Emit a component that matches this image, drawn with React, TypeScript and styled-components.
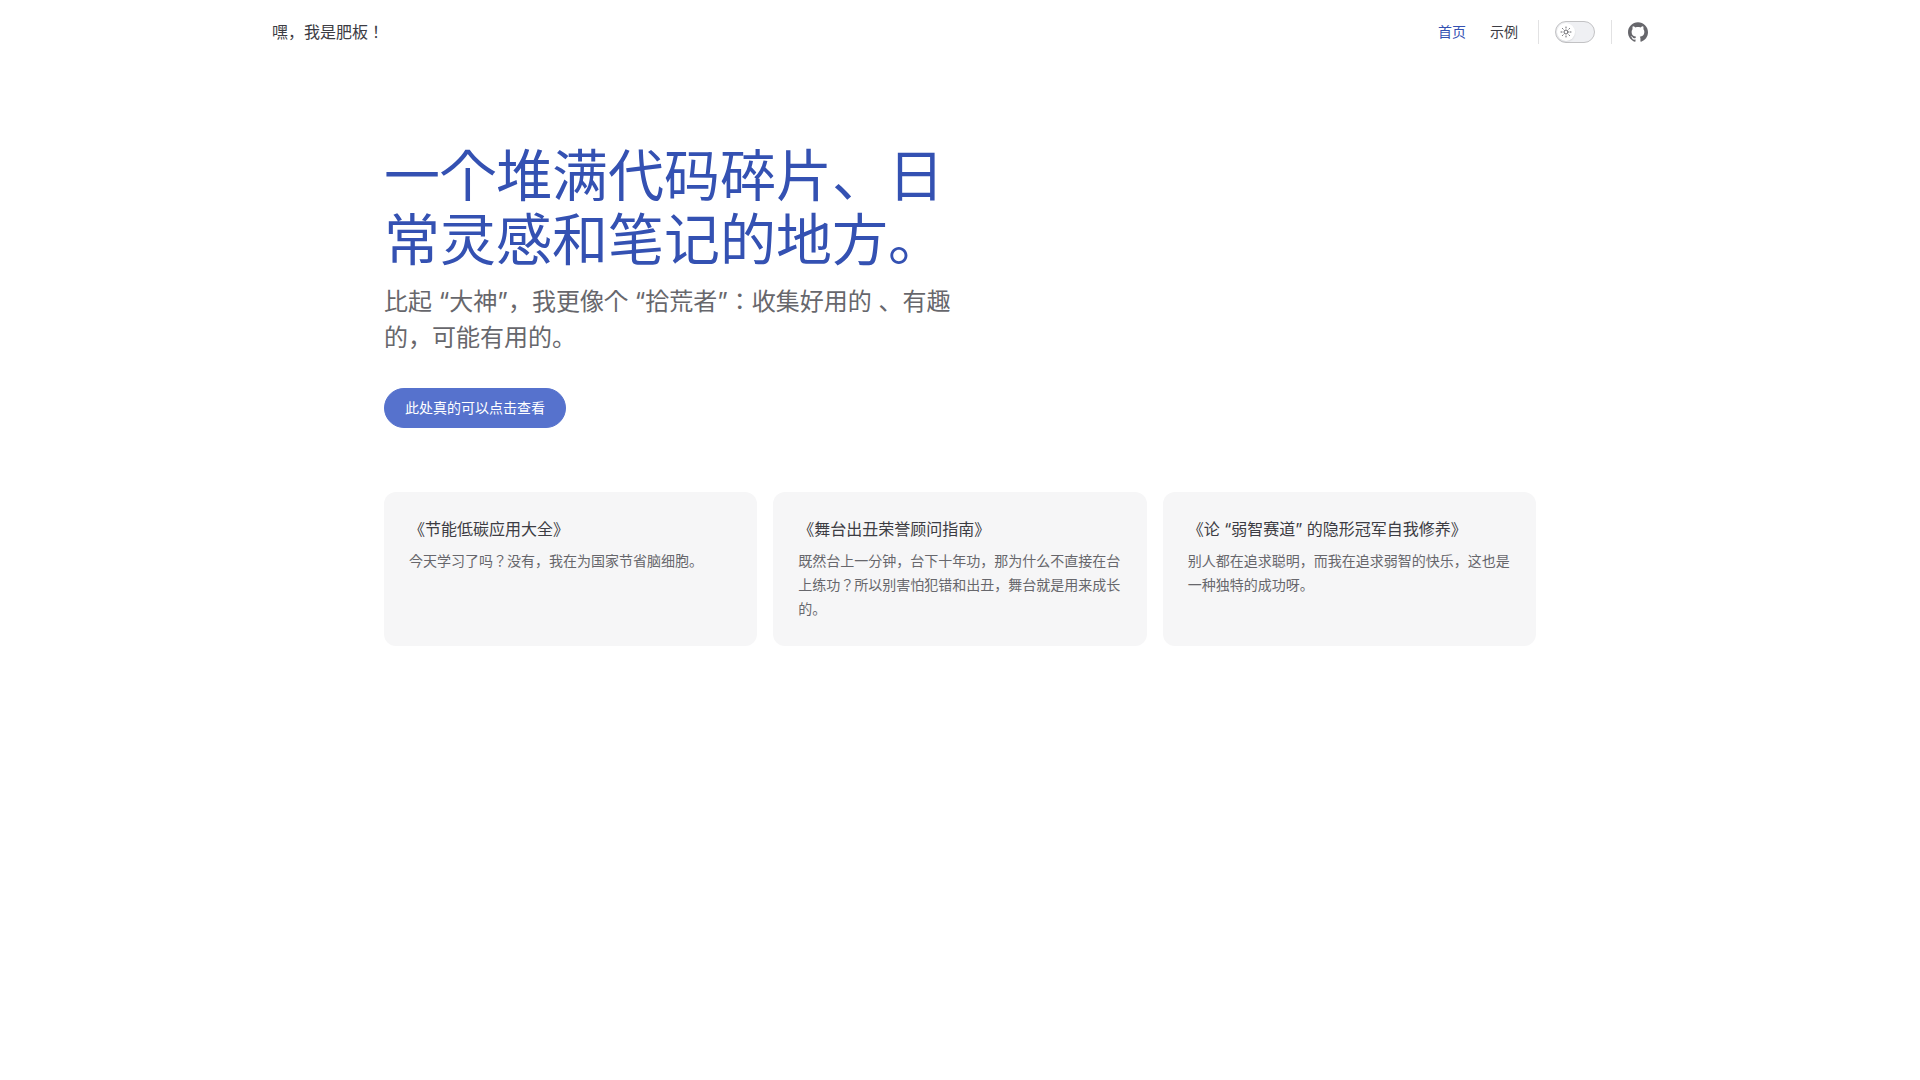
import React, { useState } from "react";
import styled, { createGlobalStyle } from "styled-components";
import { Sun } from "lucide-react";

const GlobalStyle = createGlobalStyle`
  *, *::before, *::after { box-sizing: border-box; }
  body {
    margin: 0;
    background: #ffffff;
    color: #3c3c43;
    font-family: Inter, "Noto Sans CJK JP", sans-serif;
    font-size: 16px;
    line-height: 24px;
  }
  h1, h2, p { margin: 0; font-weight: 400; }
  a { color: inherit; text-decoration: none; }
`;

const Header = styled.header`
  padding: 0 32px;
`;

const NavBar = styled.div`
  display: flex;
  align-items: center;
  justify-content: space-between;
  max-width: 1376px;
  height: 64px;
  margin: 0 auto;
`;

const SiteTitle = styled.a`
  font-size: 16px;
  line-height: 64px;
`;

const NavGroup = styled.div`
  display: flex;
  align-items: center;
`;

const Menu = styled.nav`
  display: flex;
  margin-right: 8px;
`;

const MenuLink = styled.a<{ $active?: boolean }>`
  padding: 0 12px;
  font-size: 14px;
  line-height: 64px;
  color: ${(p) => (p.$active ? "#3451b2" : "#3c3c43")};
`;

const Divider = styled.span`
  width: 1px;
  height: 24px;
  background: #e2e2e3;
`;

const Switch = styled.button`
  display: flex;
  width: 40px;
  height: 22px;
  margin: 0 16px;
  padding: 1px;
  border: 1px solid #c2c2c4;
  border-radius: 11px;
  background: #eff0f3;
  cursor: pointer;
`;

const Knob = styled.span<{ $on: boolean }>`
  display: flex;
  align-items: center;
  justify-content: center;
  width: 18px;
  height: 18px;
  margin-left: ${(p) => (p.$on ? "18px" : "0")};
  border-radius: 50%;
  background: #ffffff;
  color: #67676c;
  box-shadow: 0 1px 2px rgba(0, 0, 0, 0.04), 0 1px 2px rgba(0, 0, 0, 0.06);
`;

const SocialLink = styled.a`
  display: flex;
  margin-left: 16px;
  color: #67676c;
`;

const Main = styled.main`
  padding: 80px 64px 96px;
`;

const Container = styled.div`
  max-width: 1152px;
  margin: 0 auto;
`;

const Hero = styled.section`
  max-width: 592px;
  padding-bottom: 64px;
`;

const Headline = styled.h1`
  font-size: 56px;
  line-height: 64px;
  color: #3451b2;
`;

const Tagline = styled.p`
  max-width: 576px;
  padding-top: 12px;
  font-size: 24px;
  line-height: 36px;
  color: #67676c;
`;

const Action = styled.a`
  display: inline-block;
  margin-top: 32px;
  padding: 0 20px;
  border: 1px solid #5672cd;
  border-radius: 20px;
  background: #5672cd;
  color: #ffffff;
  font-size: 14px;
  line-height: 38px;
  vertical-align: top;
`;

const Features = styled.section`
  display: grid;
  grid-template-columns: repeat(3, 1fr);
  gap: 16px;
`;

const Card = styled.article`
  padding: 25px;
  border-radius: 12px;
  background: #f6f6f7;
`;

const CardTitle = styled.h2`
  font-size: 16px;
  line-height: 24px;
`;

const CardText = styled.p`
  padding-top: 8px;
  font-size: 14px;
  line-height: 24px;
  color: #67676c;
`;

const GithubIcon = () => (
  <svg width="20" height="20" viewBox="0 0 24 24" fill="currentColor" aria-hidden="true">
    <path d="M12 .297c-6.63 0-12 5.373-12 12 0 5.303 3.438 9.8 8.205 11.385.6.113.82-.258.82-.577 0-.285-.01-1.04-.015-2.04-3.338.724-4.042-1.61-4.042-1.61C4.422 18.07 3.633 17.7 3.633 17.7c-1.087-.744.084-.729.084-.729 1.205.084 1.838 1.236 1.838 1.236 1.07 1.835 2.809 1.305 3.495.998.108-.776.417-1.305.76-1.605-2.665-.3-5.466-1.332-5.466-5.93 0-1.31.465-2.38 1.235-3.22-.135-.303-.54-1.523.105-3.176 0 0 1.005-.322 3.3 1.23.96-.267 1.98-.399 3-.405 1.02.006 2.04.138 3 .405 2.28-1.552 3.285-1.23 3.285-1.23.645 1.653.24 2.873.12 3.176.765.84 1.23 1.91 1.23 3.22 0 4.61-2.805 5.625-5.475 5.92.42.36.81 1.096.81 2.22 0 1.606-.015 2.896-.015 3.286 0 .315.21.69.825.57C20.565 22.092 24 17.592 24 12.297c0-6.627-5.373-12-12-12" />
  </svg>
);

const features = [
  { title: "《节能低碳应用大全》", text: "今天学习了吗？没有，我在为国家节省脑细胞。" },
  {
    title: "《舞台出丑荣誉顾问指南》",
    text: "既然台上一分钟，台下十年功，那为什么不直接在台上练功？所以别害怕犯错和出丑，舞台就是用来成长的。",
  },
  {
    title: "《论 “弱智赛道” 的隐形冠军自我修养》",
    text: "别人都在追求聪明，而我在追求弱智的快乐，这也是一种独特的成功呀。",
  },
];

export default function App() {
  const [dark, setDark] = useState(false);

  return (
    <>
      <GlobalStyle />
      <Header>
        <NavBar>
          <SiteTitle href="#">嘿，我是肥板！</SiteTitle>
          <NavGroup>
            <Menu>
              <MenuLink href="#" $active>首页</MenuLink>
              <MenuLink href="#examples">示例</MenuLink>
            </Menu>
            <Divider />
            <Switch
              type="button"
              role="switch"
              aria-checked={dark}
              aria-label="切换深色模式"
              onClick={() => setDark(!dark)}
            >
              <Knob $on={dark}>
                <Sun size={12} strokeWidth={2} aria-hidden="true" />
              </Knob>
            </Switch>
            <Divider />
            <SocialLink href="#github" aria-label="GitHub">
              <GithubIcon />
            </SocialLink>
          </NavGroup>
        </NavBar>
      </Header>
      <Main>
        <Container>
          <Hero>
            <Headline>一个堆满代码碎片、日常灵感和笔记的地方。</Headline>
            <Tagline>比起 “大神”，我更像个 “拾荒者”：收集好用的 、有趣的，可能有用的。</Tagline>
            <Action href="#examples">此处真的可以点击查看</Action>
          </Hero>
          <Features>
            {features.map((f) => (
              <Card key={f.title}>
                <CardTitle>{f.title}</CardTitle>
                <CardText>{f.text}</CardText>
              </Card>
            ))}
          </Features>
        </Container>
      </Main>
    </>
  );
}
